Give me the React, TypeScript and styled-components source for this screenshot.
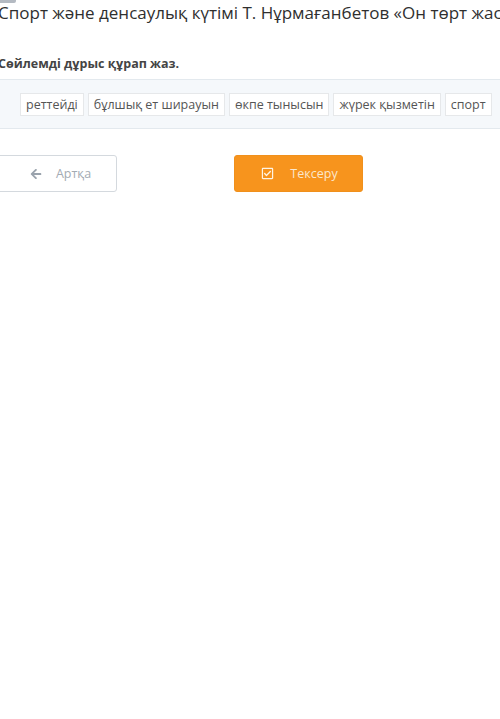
import styled, { createGlobalStyle } from 'styled-components';
import { FaArrowLeft, FaRegCheckSquare } from 'react-icons/fa';

const GlobalStyle = createGlobalStyle`
  html, body {
    margin: 0;
    padding: 0;
    background: #ffffff;
  }
  body {
    font-family: 'Open Sans', 'Liberation Sans', sans-serif;
    color: #333333;
  }
`;

const words = ['реттейді', 'бұлшық ет ширауын', 'өкпе тынысын', 'жүрек қызметін', 'спорт'];

export default function App() {
  return (
    <>
      <GlobalStyle />
      <Page>
        <Tab />
        <Title>Спорт және денсаулық күтімі Т. Нұрмағанбетов «Он төрт жасымда»</Title>
        <Question>Сөйлемді дұрыс құрап жаз.</Question>
        <WordBank>
          {words.map((w) => (
            <Chip key={w}>{w}</Chip>
          ))}
        </WordBank>
        <Actions>
          <BackButton>
            <FaArrowLeft size={12} />
            Артқа
          </BackButton>
          <CheckButton>
            <FaRegCheckSquare size={13} />
            Тексеру
          </CheckButton>
        </Actions>
      </Page>
    </>
  );
}

const Page = styled.div`
  width: 500px;
  height: 719px;
  overflow: hidden;
  display: flex;
  flex-direction: column;
`;

const Tab = styled.div`
  width: 16px;
  height: 3px;
  background: #b4bac2;
  border-radius: 0 0 2px 0;
`;

const Title = styled.h1`
  margin: 0 0 0 -2px;
  font-size: 17px;
  font-weight: 400;
  line-height: 20px;
  color: #2f2f2f;
  white-space: nowrap;
`;

const Question = styled.p`
  margin: 32px 0 0 -2px;
  font-size: 12.5px;
  font-weight: 700;
  line-height: 18px;
  color: #444444;
`;

const WordBank = styled.div`
  margin-top: 6px;
  height: 48px;
  padding: 0 0 0 20px;
  display: flex;
  align-items: center;
  gap: 4px;
  background: #f5f8fb;
  border-top: 1px solid #e3e9ee;
  border-bottom: 1px solid #e3e9ee;
`;

const Chip = styled.span`
  height: 21px;
  padding: 0 5px;
  display: flex;
  align-items: center;
  background: #ffffff;
  border: 1px solid #e6e8ea;
  font-size: 12.5px;
  color: #555555;
  white-space: nowrap;
`;

const Actions = styled.div`
  margin-top: 26px;
  margin-left: -10px;
  display: flex;
  gap: 117px;
`;

const BaseButton = styled.button`
  height: 37px;
  display: flex;
  align-items: center;
  justify-content: center;
  gap: 14px;
  border-radius: 3px;
  font-family: 'Open Sans', 'Liberation Sans', sans-serif;
  font-size: 12.5px;
  cursor: pointer;
`;

const BackButton = styled(BaseButton)`
  width: 127px;
  padding-left: 20px;
  background: #ffffff;
  border: 1px solid #d4d9de;
  color: #a3abb3;

  svg {
    color: #9aa3ad;
  }
`;

const CheckButton = styled(BaseButton)`
  width: 129px;
  background: #f7941d;
  border: 1px solid #f0901c;
  color: #fbe7cc;
  gap: 16px;
  padding-right: 4px;

  svg {
    color: #fff4e4;
  }
`;
